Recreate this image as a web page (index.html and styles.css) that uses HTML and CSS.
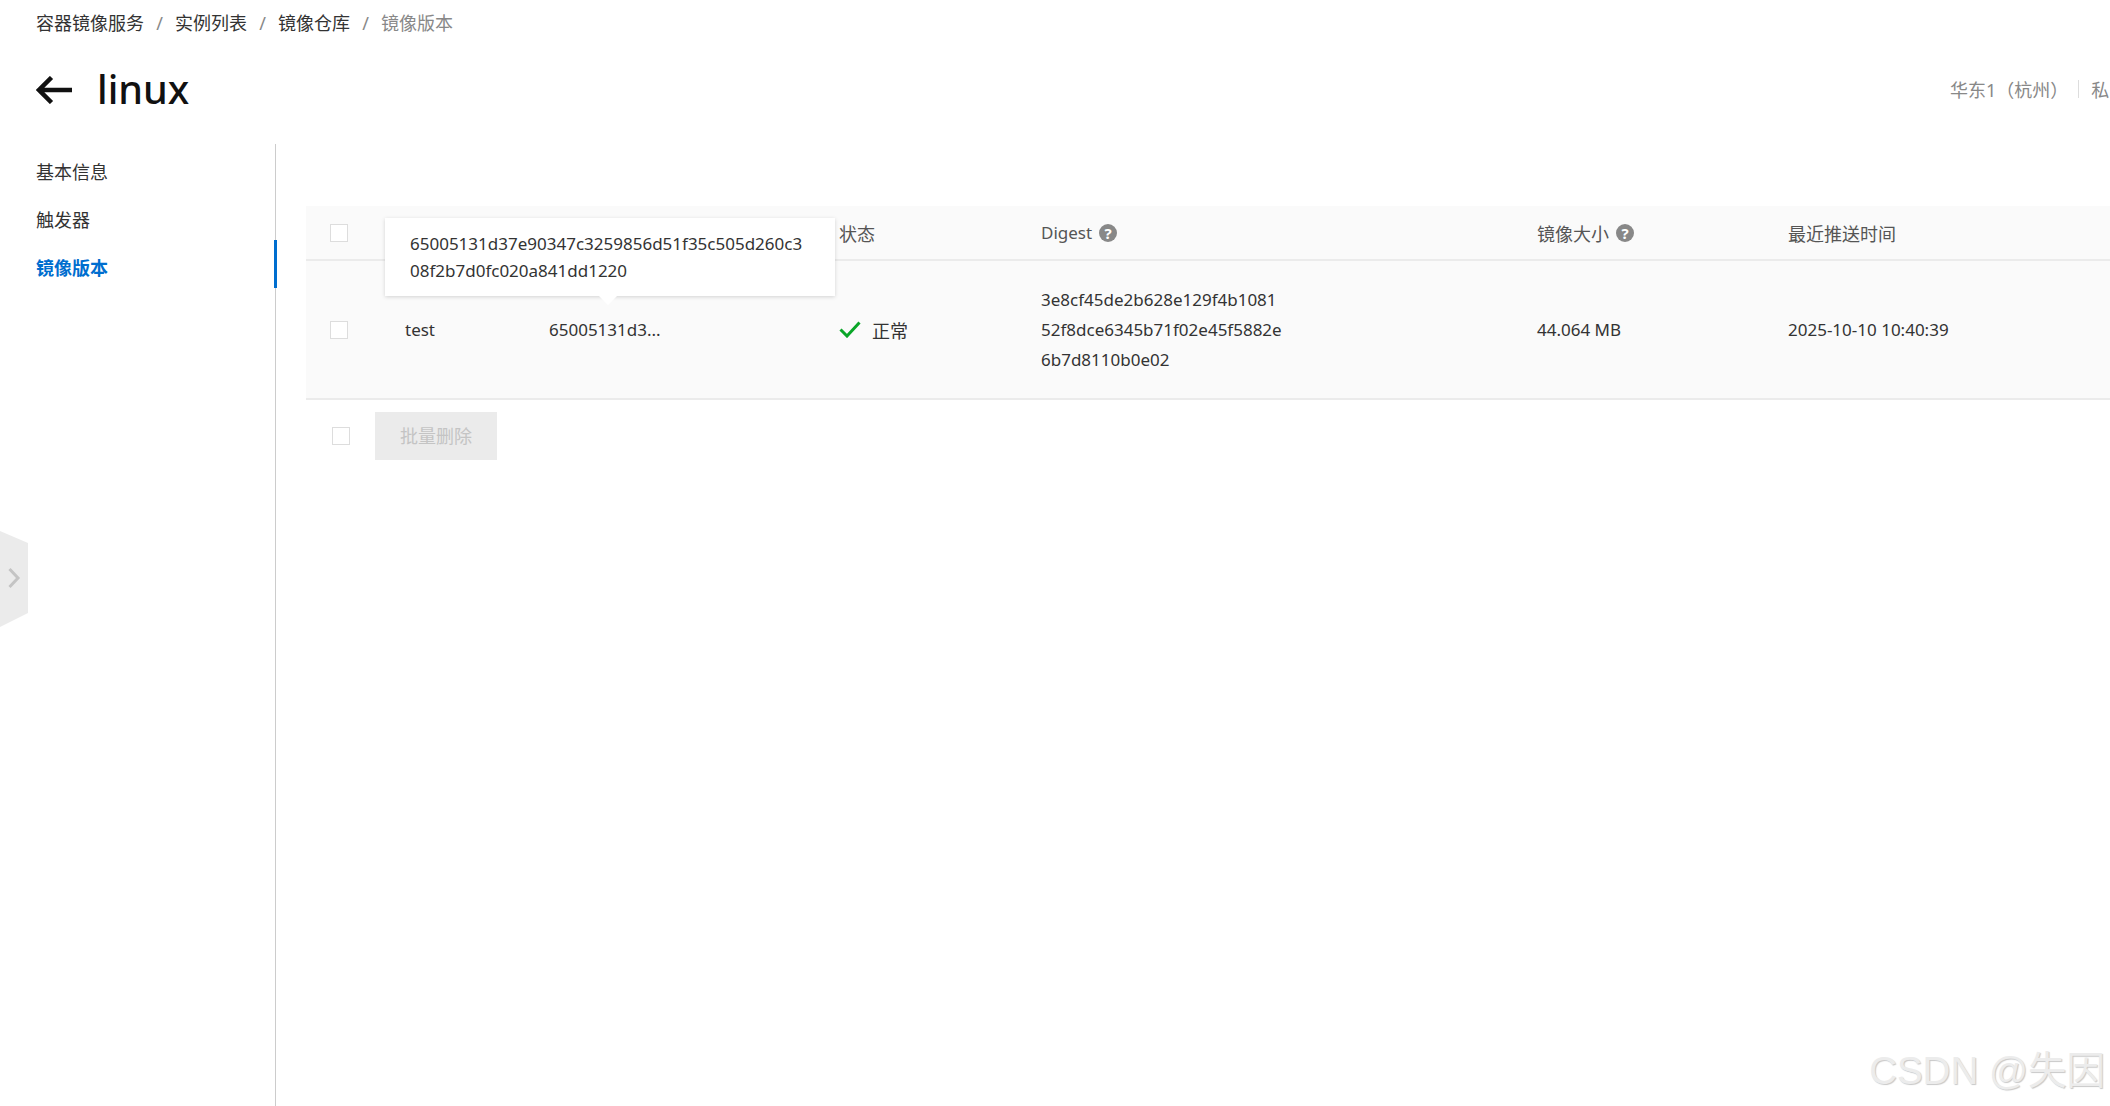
FILE: index.html
```html
<!DOCTYPE html>
<html lang="zh-CN">
<head>
<meta charset="utf-8">
<title>linux - 镜像版本</title>
<link rel="stylesheet" href="styles.css">
</head>
<body>
<div class="page">
  <nav class="crumbs">
    <a>容器镜像服务</a><span class="sep">/</span>
    <a>实例列表</a><span class="sep">/</span>
    <a>镜像仓库</a><span class="sep">/</span>
    <span class="crumb-current">镜像版本</span>
  </nav>
  <header class="title-bar">
    <svg class="back" viewBox="0 0 36 28" width="36" height="28" aria-hidden="true"><path d="M36 14H4M15.500 1.500L3 14 15.500 26.500" fill="none" stroke="#111" stroke-width="4.500"/></svg>
    <h1 class="title">linux</h1>
    <div class="meta">
      <span>华东1（杭州）</span>
      <i class="meta-sep"></i>
      <span>私</span>
    </div>
  </header>
  <div class="body-row">
    <aside class="side">
      <a class="side-item">基本信息</a>
      <a class="side-item">触发器</a>
      <a class="side-item active">镜像版本</a>
    </aside>
    <main class="content">
      <div class="table">
        <div class="row head">
          <div class="cell"><span class="check"></span></div>
          <div class="cell"></div>
          <div class="cell"></div>
          <div class="cell">状态</div>
          <div class="cell latin">Digest<span class="help">?</span></div>
          <div class="cell">镜像大小<span class="help">?</span></div>
          <div class="cell">最近推送时间</div>
        </div>
        <div class="row data">
          <div class="cell"><span class="check"></span></div>
          <div class="cell latin">test</div>
          <div class="cell latin">65005131d3...</div>
          <div class="cell">
            <svg class="ok" viewBox="0 0 22 17" width="22" height="17" aria-hidden="true"><path d="M1.500 8.500L8 15 20.500 1.500" fill="none" stroke="#0aa628" stroke-width="3"/></svg>正常
          </div>
          <div class="cell latin digest">3e8cf45de2b628e129f4b1081<br>52f8dce6345b71f02e45f5882e<br>6b7d8110b0e02</div>
          <div class="cell latin">44.064 MB</div>
          <div class="cell latin">2025-10-10 10:40:39</div>
        </div>
        <div class="tip">65005131d37e90347c3259856d51f35c505d260c3<br>08f2b7d0fc020a841dd1220</div>
      </div>
      <div class="foot">
        <span class="check"></span>
        <button class="btn" disabled>批量删除</button>
      </div>
    </main>
  </div>
  <div class="toggle">
    <svg viewBox="0 0 28 96" width="28" height="96" aria-hidden="true"><path d="M0 0L28 12V82L0 96Z" fill="#ebebeb"/><path d="M9.500 38L18 47 9.500 56" fill="none" stroke="#c4c4c4" stroke-width="3"/></svg>
  </div>
  <div class="mark">CSDN @失因</div>
</div>
</body>
</html>
```
FILE: styles.css
```css
* { box-sizing: border-box; }
html, body { margin: 0; padding: 0; }
body {
  width: 2110px;
  height: 1106px;
  overflow: hidden;
  background: #fff;
  color: #333;
  font-family: "Noto Sans", "Noto Sans CJK SC", sans-serif;
  font-size: 18px;
}
.page { position: relative; width: 2110px; height: 1106px; overflow: hidden; display: flex; flex-direction: column; }
.crumbs { height: 46px; padding-left: 36px; display: flex; align-items: center; line-height: 1; flex: none; }
.sep { width: 31px; text-align: center; color: #888; }
.crumb-current { color: #888; }
.title-bar { height: 98px; flex: none; display: flex; align-items: center; padding-left: 36px; padding-bottom: 11px; }
.back { flex: none; }
.title { margin: 0 0 0 25px; font-size: 39.500px; font-weight: 500; color: #111; line-height: 1; }
.meta { margin: 0 0 2px auto; display: flex; align-items: center; color: #888; white-space: nowrap; width: 160px; flex: none; }
.meta-sep { width: 1px; height: 18px; background: #ddd; margin: 0 12px 0 10px; flex: none; }
.body-row { flex: 1; display: flex; min-height: 0; }
.side { width: 276px; flex: none; border-right: 1px solid #ccc; }
.side-item { display: flex; align-items: center; height: 48px; padding: 5px 0 0 36px; color: #333; position: relative; }
.side-item.active { color: #006ecf; font-weight: 700; }
.side-item.active::after { content: ""; position: absolute; right: -2px; top: 0; bottom: 0; width: 3px; background: #006ecf; }
.content { flex: 1; min-width: 0; padding: 62px 0 0 30px; }
.table { position: relative; }
.row {
  display: grid;
  grid-template-columns: 99px 144px 290px 202px 496px 251px 1fr;
  background: #fafafa;
  border-bottom: 2px solid #ebebeb;
}
.head { height: 55px; color: #555; }
.data { height: 139px; }
.cell { display: flex; align-items: center; white-space: nowrap; }
.cell:first-child { padding-left: 24px; }
.latin { font-size: 17px; }
.digest { line-height: 30px; display: block; align-self: center; }
.check { width: 18px; height: 18px; background: #fff; border: 1px solid #ddd; flex: none; display: block; }
.help { width: 18px; height: 18px; border-radius: 50%; background: #888; color: #fff; font-size: 15px; font-weight: 700; line-height: 18px; text-align: center; margin-left: 7px; flex: none; }
.ok { margin-right: 11px; flex: none; }
.tip {
  position: absolute;
  left: 79px;
  top: 12px;
  width: 450px;
  height: 78px;
  padding: 12px 25px;
  background: #fff;
  font-size: 17px;
  line-height: 27px;
  color: #333;
  box-shadow: 0 1px 4px rgba(0, 0, 0, 0.16);
  white-space: nowrap;
}
.tip::after {
  content: "";
  position: absolute;
  left: 214px;
  top: 100%;
  border-style: solid;
  border-width: 9px 9px 0;
  border-color: #fff transparent transparent;
}
.foot { display: flex; align-items: center; padding: 12px 0 0 26px; }
.btn {
  margin-left: 25px;
  width: 122px;
  height: 48px;
  border: 0;
  background: #ebebeb;
  color: #c4c4c4;
  font: inherit;
  line-height: 46px;
  padding: 0;
}
.toggle { position: absolute; left: 0; top: 531px; width: 28px; height: 96px; line-height: 0; }
.mark {
  position: absolute;
  right: 5px;
  bottom: 16px;
  font-family: "Liberation Sans", "Noto Sans CJK SC", sans-serif;
  font-size: 38.500px;
  line-height: 1;
  color: #ececec;
  text-shadow: 1px 1px 1px #c8c8c8;
  white-space: nowrap;
}
```
